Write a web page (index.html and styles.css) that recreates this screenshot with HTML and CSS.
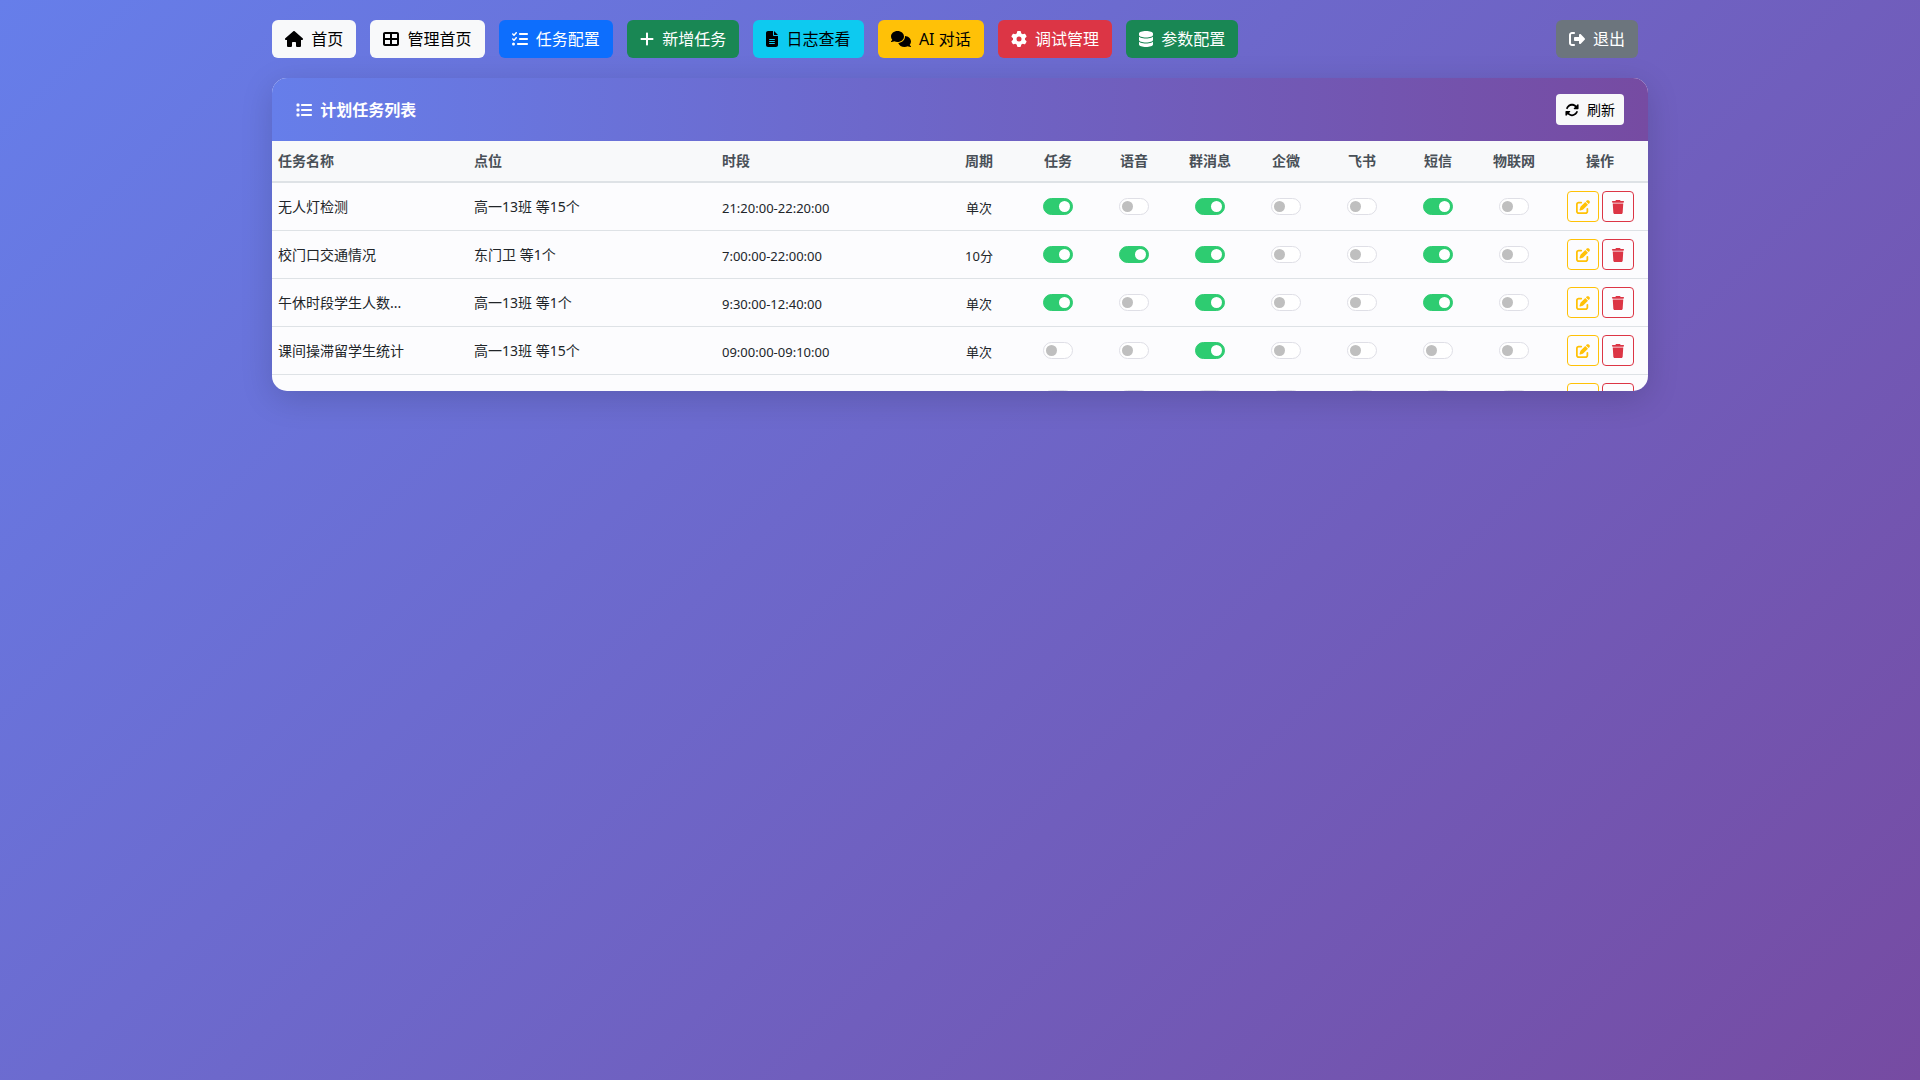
FILE: index.html
```html
<!DOCTYPE html>
<html lang="zh-CN">

<head>
  <meta charset="utf-8">
  <meta name="viewport" content="width=device-width, initial-scale=1">
  <title>任务配置</title>
  <link rel="stylesheet" href="styles.css">
</head>

<body>
  <!-- icon sprite -->
  <svg class="sprite" aria-hidden="true">
    <symbol id="i-home" viewBox="0 0 576 512"><path d="M575.8 255.5c0 18-15 32.1-32 32.1h-32l.7 160.2c0 2.7-.2 5.4-.5 8.1V472c0 22.1-17.9 40-40 40H456c-1.1 0-2.2 0-3.3-.1c-1.4 .1-2.8 .1-4.2 .1H416 392c-22.1 0-40-17.9-40-40V448 384c0-17.7-14.3-32-32-32H256c-17.7 0-32 14.3-32 32v64 24c0 22.1-17.9 40-40 40H160 128.1c-1.5 0-3-.1-4.5-.2c-1.2 .1-2.4 .2-3.6 .2H104c-22.1 0-40-17.9-40-40V360c0-.9 0-1.9 .1-2.8V287.6H32c-18 0-32-14-32-32.1c0-9 3-17 10-24L266.4 8c7-7 15-8 22-8s15 2 21 7L564.8 231.5c8 7 12 15 11 24z"/></symbol>
    <symbol id="i-grid" viewBox="0 0 512 512"><path d="M448 96V224H288V96H448zm0 192V416H288V288H448zM224 224H64V96H224V224zM64 288H224V416H64V288zM64 32C28.7 32 0 60.7 0 96V416c0 35.3 28.7 64 64 64H448c35.3 0 64-28.7 64-64V96c0-35.3-28.7-64-64-64H64z"/></symbol>
    <symbol id="i-tasks" viewBox="0 0 512 512"><path d="M152.1 38.2c9.9 8.9 10.7 24 1.8 33.9l-72 80c-4.4 4.9-10.6 7.8-17.2 7.9s-12.9-2.4-17.6-7L7 113C-2.3 103.6-2.3 88.4 7 79s24.6-9.4 33.9 0l22.1 22.1 55.1-61.2c8.9-9.9 24-10.7 33.9-1.8zm0 160c9.9 8.9 10.7 24 1.8 33.9l-72 80c-4.4 4.9-10.6 7.8-17.2 7.9s-12.9-2.4-17.6-7L7 273c-9.4-9.4-9.4-24.6 0-33.9s24.6-9.4 33.9 0l22.1 22.1 55.1-61.2c8.9-9.9 24-10.7 33.9-1.8zM224 96c0-17.7 14.3-32 32-32H480c17.7 0 32 14.3 32 32s-14.3 32-32 32H256c-17.7 0-32-14.3-32-32zm0 160c0-17.7 14.3-32 32-32H480c17.7 0 32 14.3 32 32s-14.3 32-32 32H256c-17.7 0-32-14.3-32-32zM160 416c0-17.7 14.3-32 32-32H480c17.7 0 32 14.3 32 32s-14.3 32-32 32H192c-17.7 0-32-14.3-32-32zM48 368a48 48 0 1 1 0 96 48 48 0 1 1 0-96z"/></symbol>
    <symbol id="i-plus" viewBox="0 0 448 512"><path d="M256 80c0-17.7-14.3-32-32-32s-32 14.3-32 32V224H48c-17.7 0-32 14.3-32 32s14.3 32 32 32H192V432c0 17.7 14.3 32 32 32s32-14.3 32-32V288H400c17.7 0 32-14.3 32-32s-14.3-32-32-32H256V80z"/></symbol>
    <symbol id="i-file" viewBox="0 0 384 512"><path d="M64 0C28.7 0 0 28.7 0 64V448c0 35.3 28.7 64 64 64H320c35.3 0 64-28.7 64-64V160H256c-17.7 0-32-14.3-32-32V0H64zM256 0V128H384L256 0zM112 256H272c8.8 0 16 7.2 16 16s-7.2 16-16 16H112c-8.8 0-16-7.2-16-16s7.2-16 16-16zm0 64H272c8.8 0 16 7.2 16 16s-7.2 16-16 16H112c-8.8 0-16-7.2-16-16s7.2-16 16-16zm0 64H272c8.8 0 16 7.2 16 16s-7.2 16-16 16H112c-8.8 0-16-7.2-16-16s7.2-16 16-16z"/></symbol>
    <symbol id="i-comments" viewBox="0 0 640 512"><path d="M208 352c114.9 0 208-78.8 208-176S322.9 0 208 0S0 78.8 0 176c0 38.6 14.7 74.3 39.6 103.4c-3.5 9.4-8.7 17.7-14.2 24.7c-4.8 6.2-9.7 11-13.3 14.3c-1.8 1.6-3.3 2.9-4.3 3.7c-.5 .4-.9 .7-1.1 .8l-.2 .2C1 327.2-1.4 334.4 .8 340.9S9.1 352 16 352c21.8 0 43.8-5.6 62.1-12.5c9.2-3.5 17.8-7.4 25.2-11.4C134.1 343.3 169.8 352 208 352zM448 176c0 112.3-99.1 196.9-216.5 207C255.8 457.4 336.4 512 432 512c38.2 0 73.9-8.7 104.7-23.9c7.5 4 16 7.9 25.2 11.4c18.3 6.9 40.3 12.5 62.1 12.5c6.9 0 13.1-4.5 15.2-11.1c2.1-6.6-.2-13.8-5.8-17.9l-.2-.2c-.2-.2-.6-.4-1.1-.8c-1-.8-2.5-2-4.3-3.7c-3.6-3.3-8.5-8.1-13.3-14.3c-5.5-7-10.7-15.4-14.2-24.7c24.9-29 39.6-64.7 39.6-103.4c0-92.8-84.9-168.9-192.6-175.5c.4 5.1 .6 10.3 .6 15.5z"/></symbol>
    <symbol id="i-gear" viewBox="0 0 512 512"><path d="M495.9 166.6c3.2 8.7 .5 18.4-6.4 24.6l-43.3 39.4c1.1 8.3 1.7 16.8 1.7 25.4s-.6 17.1-1.7 25.4l43.3 39.4c6.9 6.2 9.6 15.9 6.4 24.6c-4.4 11.9-9.7 23.3-15.8 34.3l-4.7 8.1c-6.6 11-14 21.4-22.1 31.2c-5.9 7.2-15.7 9.6-24.5 6.8l-55.7-17.7c-13.4 10.3-28.2 18.9-44 25.4l-12.5 57.1c-2 9.1-9 16.3-18.2 17.8c-13.8 2.3-28 3.5-42.5 3.5s-28.7-1.2-42.5-3.5c-9.2-1.5-16.2-8.7-18.2-17.8l-12.5-57.1c-15.8-6.5-30.6-15.1-44-25.4L83.1 425.9c-8.8 2.8-18.6 .3-24.5-6.8c-8.1-9.8-15.5-20.2-22.1-31.2l-4.7-8.1c-6.1-11-11.4-22.4-15.8-34.3c-3.2-8.7-.5-18.4 6.4-24.6l43.3-39.4C64.6 273.1 64 264.6 64 256s.6-17.1 1.7-25.4L22.4 191.2c-6.9-6.2-9.6-15.9-6.4-24.6c4.4-11.9 9.7-23.3 15.8-34.3l4.7-8.1c6.6-11 14-21.4 22.1-31.2c5.9-7.2 15.7-9.6 24.5-6.8l55.7 17.7c13.4-10.3 28.2-18.9 44-25.4l12.5-57.1c2-9.1 9-16.3 18.2-17.8C227.3 1.2 241.5 0 256 0s28.7 1.2 42.5 3.5c9.2 1.5 16.2 8.7 18.2 17.8l12.5 57.1c15.8 6.5 30.6 15.1 44 25.4l55.7-17.7c8.8-2.8 18.6-.3 24.5 6.8c8.1 9.8 15.5 20.2 22.1 31.2l4.7 8.1c6.1 11 11.4 22.4 15.8 34.3zM256 336a80 80 0 1 0 0-160 80 80 0 1 0 0 160z"/></symbol>
    <symbol id="i-database" viewBox="0 0 448 512"><path d="M448 80v48c0 44.2-100.3 80-224 80S0 172.2 0 128V80C0 35.8 100.3 0 224 0S448 35.8 448 80zM393.2 214.7c20.8-7.4 39.9-16.9 54.8-28.6V288c0 44.2-100.3 80-224 80S0 332.2 0 288V186.1c14.9 11.8 34 21.2 54.8 28.6C99.7 230.7 159.5 240 224 240s124.3-9.3 169.2-25.3zM0 346.1c14.9 11.8 34 21.2 54.8 28.6C99.7 390.7 159.5 400 224 400s124.3-9.3 169.2-25.3c20.8-7.4 39.9-16.9 54.8-28.6V432c0 44.2-100.3 80-224 80S0 476.2 0 432V346.1z"/></symbol>
    <symbol id="i-logout" viewBox="0 0 512 512"><path d="M377.9 105.9L500.7 228.7c7.2 7.2 11.3 17.1 11.3 27.3s-4.1 20.1-11.3 27.3L377.9 406.1c-6.4 6.4-15 9.9-24 9.9c-18.7 0-33.9-15.2-33.9-33.9l0-62.1-128 0c-17.7 0-32-14.3-32-32l0-64c0-17.7 14.3-32 32-32l128 0 0-62.1c0-18.7 15.2-33.9 33.9-33.9c9 0 17.6 3.6 24 9.9zM160 96L96 96c-17.7 0-32 14.3-32 32l0 256c0 17.7 14.3 32 32 32l64 0c17.7 0 32 14.3 32 32s-14.3 32-32 32l-64 0c-53 0-96-43-96-96L0 128C0 75 43 32 96 32l64 0c17.7 0 32 14.3 32 32s-14.3 32-32 32z"/></symbol>
    <symbol id="i-list" viewBox="0 0 512 512"><path d="M40 48C26.7 48 16 58.7 16 72v48c0 13.3 10.7 24 24 24H88c13.3 0 24-10.7 24-24V72c0-13.3-10.7-24-24-24H40zM192 64c-17.7 0-32 14.3-32 32s14.3 32 32 32H480c17.7 0 32-14.3 32-32s-14.3-32-32-32H192zm0 160c-17.7 0-32 14.3-32 32s14.3 32 32 32H480c17.7 0 32-14.3 32-32s-14.3-32-32-32H192zm0 160c-17.7 0-32 14.3-32 32s14.3 32 32 32H480c17.7 0 32-14.3 32-32s-14.3-32-32-32H192zM16 232v48c0 13.3 10.7 24 24 24H88c13.3 0 24-10.7 24-24V232c0-13.3-10.7-24-24-24H40c-13.3 0-24 10.7-24 24zM40 368c-13.3 0-24 10.7-24 24v48c0 13.3 10.7 24 24 24H88c13.3 0 24-10.7 24-24V392c0-13.3-10.7-24-24-24H40z"/></symbol>
    <symbol id="i-refresh" viewBox="0 0 512 512"><path d="M142.9 142.9c62.2-62.2 162.7-62.5 225.3-1L327 183c-6.9 6.9-8.9 17.2-5.2 26.2s12.5 14.8 22.2 14.8H472c13.3 0 24-10.7 24-24V72c0-9.7-5.8-18.5-14.8-22.2s-19.3-1.7-26.2 5.2L413.4 96.6c-87.6-86.5-228.7-86.2-315.8 1C73.2 122 55.6 150.7 44.8 181.4c-5.9 16.7 2.9 34.9 19.5 40.8s34.9-2.9 40.8-19.5c7.7-21.8 20.2-42.3 37.8-59.8zM16 312V440c0 9.7 5.8 18.5 14.8 22.2s19.3 1.7 26.2-5.2l41.6-41.6c87.6 86.5 228.7 86.2 315.8-1c24.4-24.4 42.1-53.1 52.9-83.7c5.9-16.7-2.9-34.9-19.5-40.8s-34.9 2.9-40.8 19.5c-7.7 21.8-20.2 42.3-37.8 59.8c-62.2 62.2-162.7 62.5-225.3 1L185 329c6.9-6.9 8.9-17.2 5.2-26.2s-12.5-14.8-22.2-14.8H40c-13.3 0-24 10.7-24 24z"/></symbol>
    <symbol id="i-edit" viewBox="0 0 512 512"><path d="M471.6 21.7c-21.9-21.9-57.3-21.9-79.2 0L362.3 51.7l97.9 97.9 30.1-30.1c21.9-21.9 21.9-57.3 0-79.2L471.6 21.7zm-299.2 220c-6.1 6.1-10.8 13.6-13.5 21.9l-29.6 88.8c-2.9 8.6-.6 18.1 5.8 24.6s15.9 8.7 24.6 5.8l88.8-29.6c8.2-2.7 15.7-7.4 21.9-13.5L437.7 172.3 339.7 74.3 172.4 241.7zM96 64C43 64 0 107 0 160V416c0 53 43 96 96 96H352c53 0 96-43 96-96V320c0-17.7-14.3-32-32-32s-32 14.3-32 32v96c0 17.7-14.3 32-32 32H96c-17.7 0-32-14.3-32-32V160c0-17.7 14.3-32 32-32h96c17.7 0 32-14.3 32-32s-14.3-32-32-32H96z"/></symbol>
    <symbol id="i-trash" viewBox="0 0 448 512"><path d="M135.2 17.7L128 32H32C14.3 32 0 46.3 0 64S14.3 96 32 96H416c17.7 0 32-14.3 32-32s-14.3-32-32-32H320l-7.2-14.3C307.4 6.8 296.3 0 284.2 0H163.8c-12.1 0-23.2 6.8-28.6 17.7zM416 128H32L53.2 467c1.6 25.3 22.6 45 47.9 45H346.9c25.3 0 46.3-19.7 47.9-45L416 128z"/></symbol>
  </svg>

  <div class="container">
    <nav class="top-nav">
      <div class="nav-links">
        <a href="#" class="btn btn-light"><svg class="icon w18"><use href="#i-home"/></svg> 首页</a>
        <a href="#" class="btn btn-light"><svg class="icon"><use href="#i-grid"/></svg> 管理首页</a>
        <a href="#" class="btn btn-primary"><svg class="icon"><use href="#i-tasks"/></svg> 任务配置</a>
        <a href="#" class="btn btn-success"><svg class="icon w14"><use href="#i-plus"/></svg> 新增任务</a>
        <a href="#" class="btn btn-info"><svg class="icon w12"><use href="#i-file"/></svg> 日志查看</a>
        <a href="#" class="btn btn-warning"><svg class="icon w20"><use href="#i-comments"/></svg> AI 对话</a>
        <a href="#" class="btn btn-danger"><svg class="icon"><use href="#i-gear"/></svg> 调试管理</a>
        <a href="#" class="btn btn-success"><svg class="icon w14"><use href="#i-database"/></svg> 参数配置</a>
      </div>
      <a href="#" class="btn btn-secondary"><svg class="icon"><use href="#i-logout"/></svg> 退出</a>
    </nav>

    <main class="card">
      <header class="card-header">
        <h1 class="card-title"><svg class="icon"><use href="#i-list"/></svg> 计划任务列表</h1>
        <button type="button" class="btn-sm btn-light" onclick="drawTable(tasks)"><svg class="icon"><use href="#i-refresh"/></svg> 刷新</button>
      </header>

      <div class="table-wrap">
        <table>
          <thead>
            <tr>
              <th class="col-name">任务名称</th>
              <th class="col-point">点位</th>
              <th class="col-time">时段</th>
              <th class="col-cycle">周期</th>
              <th class="col-switch">任务</th>
              <th class="col-switch">语音</th>
              <th class="col-switch">群消息</th>
              <th class="col-switch">企微</th>
              <th class="col-switch">飞书</th>
              <th class="col-switch">短信</th>
              <th class="col-switch">物联网</th>
              <th class="col-action">操作</th>
            </tr>
          </thead>
          <tbody id="taskRows"></tbody>
        </table>
      </div>
    </main>
  </div>

  <script>
    const channels = ['任务', '语音', '群消息', '企微', '飞书', '短信', '物联网'];

    // on: one flag per channel, in the order above
    const tasks = [
      { name: '无人灯检测', point: '高一13班 等15个', time: '21:20:00-22:20:00', cycle: '单次', on: [1, 0, 1, 0, 0, 1, 0] },
      { name: '校门口交通情况', point: '东门卫 等1个', time: '7:00:00-22:00:00', cycle: '10分', on: [1, 1, 1, 0, 0, 1, 0] },
      { name: '午休时段学生人数...', point: '高一13班 等1个', time: '9:30:00-12:40:00', cycle: '单次', on: [1, 0, 1, 0, 0, 1, 0] },
      { name: '课间操滞留学生统计', point: '高一13班 等15个', time: '09:00:00-09:10:00', cycle: '单次', on: [0, 0, 1, 0, 0, 0, 0] },
      { name: '', point: '', time: '', cycle: '', on: [0, 0, 0, 0, 0, 0, 0] }
    ];

    function drawTable(records) {
      let html = '';

      for (let rec of records) {
        let switches = '';
        for (let i = 0; i < channels.length; i++) {
          switches += `<td class="col-switch"><input type="checkbox" class="switch" aria-label="${channels[i]}" ${rec.on[i] ? 'checked' : ''}></td>`;
        }

        html += `<tr>
          <td>${rec.name}</td>
          <td>${rec.point}</td>
          <td class="small">${rec.time}</td>
          <td class="small col-cycle">${rec.cycle}</td>
          ${switches}
          <td class="col-action">
            <div class="actions">
              <button type="button" class="btn-outline edit" aria-label="编辑"><svg class="icon"><use href="#i-edit"/></svg></button>
              <button type="button" class="btn-outline delete" aria-label="删除"><svg class="icon"><use href="#i-trash"/></svg></button>
            </div>
          </td>
        </tr>`;
      }

      document.querySelector('#taskRows').innerHTML = html;
    }

    drawTable(tasks);
  </script>
</body>

</html>
```

FILE: styles.css
```css
* {
  box-sizing: border-box;
}

body {
  margin: 0;
  min-height: 100vh;
  background: linear-gradient(135deg, #667eea 0%, #764ba2 100%);
  color: #212529;
  font-family: "Noto Sans", "Noto Sans CJK SC", sans-serif;
  font-size: 16px;
  line-height: 24px;
}

.sprite {
  display: none;
}

.container {
  max-width: 1400px;
  margin: 0 auto;
  padding: 20px 12px;
}

.icon {
  width: 16px;
  height: 16px;
  margin-right: 4px;
  vertical-align: -2px;
  fill: currentColor;
}

.w12 { width: 12px; }
.w14 { width: 14px; }
.w18 { width: 18px; }
.w20 { width: 20px; }

/* top navigation */
.top-nav {
  display: flex;
  justify-content: space-between;
  margin-bottom: 20px;
}

.btn {
  display: inline-block;
  height: 38px;
  margin-right: 10px;
  padding: 7px 13px;
  border-radius: 6px;
  text-decoration: none;
  white-space: nowrap;
  vertical-align: top;
}

.btn-light { background: #f8f9fa; color: #000; }
.btn-primary { background: #0d6efd; color: #fff; }
.btn-success { background: #198754; color: #fff; }
.btn-info { background: #0dcaf0; color: #000; }
.btn-warning { background: #ffc107; color: #000; }
.btn-danger { background: #dc3545; color: #fff; }
.btn-secondary { background: #6c757d; color: #fff; }

/* task card */
.card {
  overflow: hidden;
  border-radius: 15px;
  background: #fcfcfe;
  box-shadow: 0 8px 32px rgba(0, 0, 0, 0.15);
}

.card-header {
  display: flex;
  justify-content: space-between;
  align-items: center;
  padding: 16px 24px;
  background: linear-gradient(90deg, #667eea 0%, #764ba2 100%);
  color: #fff;
}

.card-title {
  margin: 0;
  font-size: 16px;
  font-weight: bold;
}

.btn-sm {
  height: 31px;
  padding: 4px 9px;
  border: 0;
  border-radius: 4px;
  font-family: inherit;
  font-size: 14px;
  line-height: 21px;
  cursor: pointer;
}

.btn-sm .icon,
.btn-outline .icon {
  width: 14px;
  height: 14px;
}

.table-wrap {
  max-height: 250px;
  overflow-y: auto;
  scrollbar-width: none;
}

table {
  width: 100%;
  table-layout: fixed;
  border-collapse: separate;
  border-spacing: 0;
  font-size: 14px;
  line-height: 20px;
}

th {
  height: 42px;
  padding: 0 6px;
  border-bottom: 2px solid #dee2e6;
  background: #f8f9fa;
  color: #495057;
  font-weight: 600;
  text-align: left;
  white-space: nowrap;
}

td {
  height: 48px;
  padding: 0 6px;
  border-bottom: 1px solid #dee2e6;
  white-space: nowrap;
}

.small {
  padding-top: 2px;
  font-size: 13px;
}

.col-name { width: 196px; }
.col-point { width: 248px; }
.col-time { width: 222px; }
.col-cycle { width: 82px; text-align: center; }
.col-switch { width: 76px; text-align: center; }
.col-action { width: 96px; text-align: center; }

.switch {
  appearance: none;
  display: block;
  width: 30px;
  height: 17px;
  margin: 0 auto;
  padding: 2px;
  border: 1px solid #dfdfe6;
  border-radius: 9px;
  background: #fff;
  cursor: pointer;
}

.switch::before {
  content: "";
  display: block;
  width: 11px;
  height: 11px;
  border-radius: 50%;
  background: #bfbfbf;
}

.switch:checked {
  border-color: #2ecc71;
  background: #2ecc71;
}

.switch:checked::before {
  margin-left: auto;
  background: #fff;
}

.actions {
  display: flex;
  justify-content: center;
  gap: 3px;
}

.btn-outline {
  display: flex;
  align-items: center;
  justify-content: center;
  width: 32px;
  height: 31px;
  padding: 0;
  border: 1px solid;
  border-radius: 4px;
  background: transparent;
  cursor: pointer;
}

.btn-outline .icon {
  margin: 0;
}

.edit { color: #ffc107; }
.delete { color: #dc3545; }
```
